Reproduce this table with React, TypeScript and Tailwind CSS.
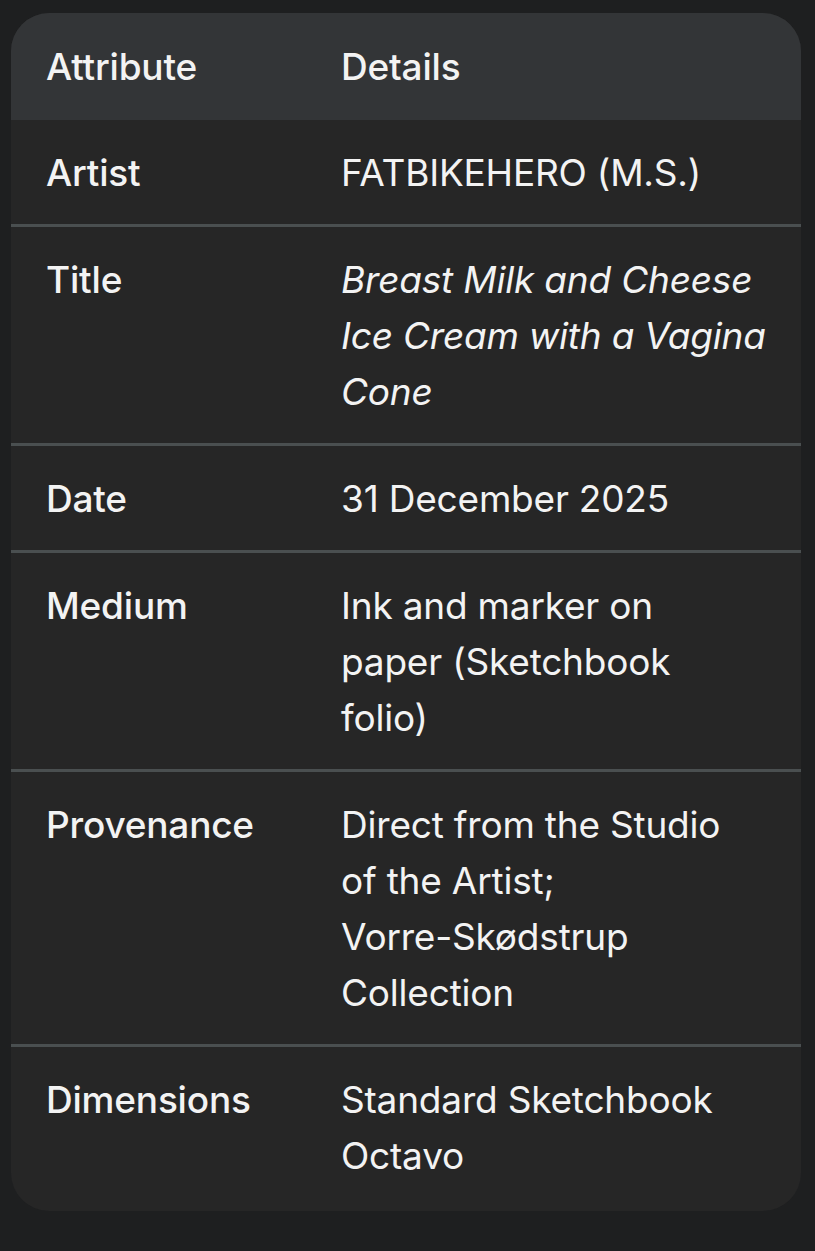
import React from "react";

const rows: { label: string; lines: string[]; italic?: boolean }[] = [
  { label: "Artist", lines: ["FATBIKEHERO (M.S.)"] },
  { label: "Title", lines: ["Breast Milk and Cheese", "Ice Cream with a Vagina", "Cone"], italic: true },
  { label: "Date", lines: ["31 December 2025"] },
  { label: "Medium", lines: ["Ink and marker on", "paper (Sketchbook", "folio)"] },
  { label: "Provenance", lines: ["Direct from the Studio", "of the Artist;", "Vorre-Skødstrup", "Collection"] },
  { label: "Dimensions", lines: ["Standard Sketchbook", "Octavo"] },
];

export default function App() {
  return (
    <div
      className="min-h-[1251px] w-[815px] bg-[#1e1f20] pt-[13px] pl-[11px]"
      style={{ fontFamily: "Inter, 'Noto Sans', Roboto, sans-serif" }}
    >
      <div className="w-[790px] overflow-hidden rounded-[38px] bg-[#262626] text-[#f3f3f3]">
        <table className="w-full border-collapse text-left text-[37px] leading-[56px] tracking-[-0.2px]">
          <thead>
            <tr className="bg-[#333537]">
              <th className="w-[295px] pl-[35px] pr-[20px] pt-[26px] pb-[25px] align-top font-medium">Attribute</th>
              <th className="pl-[35px] pr-[20px] pt-[26px] pb-[25px] align-top font-medium">Details</th>
            </tr>
          </thead>
          <tbody>
            {rows.map((r, i) => (
              <tr key={r.label} className={i < rows.length - 1 ? "border-b-[3px] border-[#4a4f50]" : ""}>
                <td className="pl-[35px] pr-[20px] pt-[25px] pb-[23px] align-top font-medium">{r.label}</td>
                <td className={`pl-[35px] pr-[20px] pt-[25px] pb-[23px] align-top font-normal ${r.italic ? "italic" : ""}`}>
                  {r.lines.map((l) => (
                    <span key={l} className="block whitespace-nowrap">
                      {l}
                    </span>
                  ))}
                </td>
              </tr>
            ))}
          </tbody>
        </table>
        <div className="h-[4px]" />
      </div>
    </div>
  );
}
